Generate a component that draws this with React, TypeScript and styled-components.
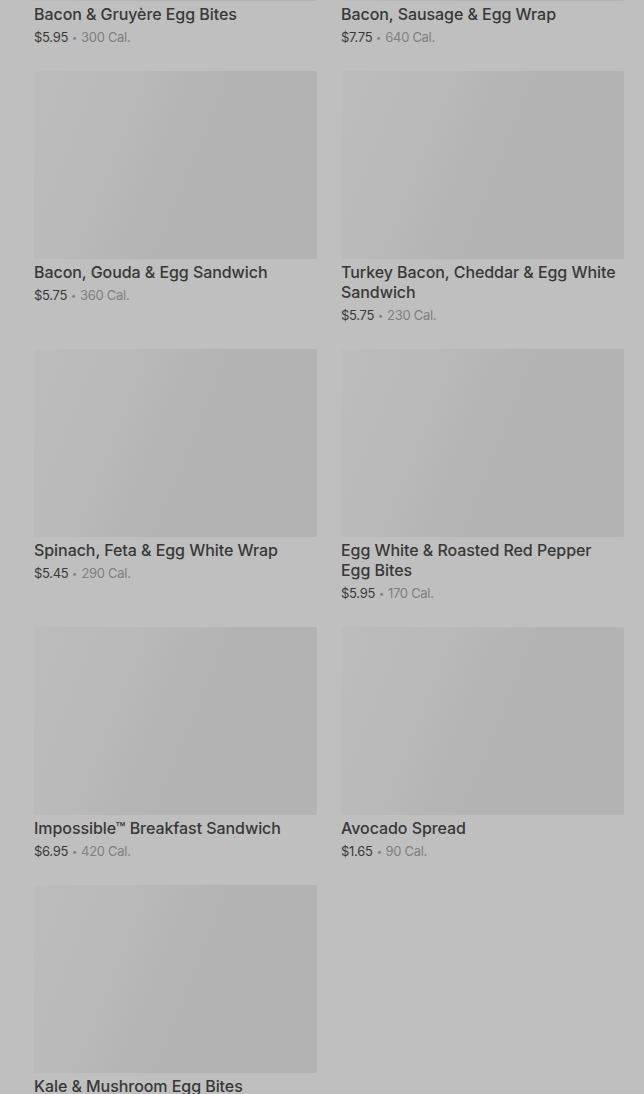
import React from "react";
import styled, { createGlobalStyle } from "styled-components";

const Global = createGlobalStyle`
  html, body {
    margin: 0;
    padding: 0;
    background: #bfbfbf;
    overflow: hidden;
  }
  body {
    font-family: Inter, "Noto Sans", "Liberation Sans", sans-serif;
  }
`;

const Page = styled.div`
  width: 644px;
  height: 1094px;
  overflow: hidden;
  background: #bfbfbf;
`;

const Grid = styled.ul`
  list-style: none;
  margin: -187px 0 0 0;
  padding: 0 20px 0 34px;
  display: grid;
  grid-template-columns: 283px 283px;
  column-gap: 24px;
  row-gap: 24px;
  align-items: start;
`;

const Card = styled.li`
  display: flex;
  flex-direction: column;
`;

const Thumb = styled.div`
  width: 283px;
  height: 188px;
  border-radius: 2px;
  background: linear-gradient(
    112deg,
    #bcbcbc 0%,
    #b9b9b9 30%,
    #b3b3b3 55%,
    #b3b3b3 100%
  );
`;

const Title = styled.div`
  margin-top: 3px;
  font-size: 16px;
  line-height: 20px;
  font-weight: 500;
  letter-spacing: -0.06px;
  color: #383838;
`;

const Meta = styled.div`
  margin-top: 3px;
  height: 20px;
  font-size: 13px;
  line-height: 20px;
  color: #3a3a3a;
  letter-spacing: -0.3px;
`;

const Dot = styled.span`
  display: inline-block;
  color: #808080;
  line-height: 20px;
  margin: 0 3px;
  transform: scale(0.7);
`;

const Cal = styled.span`
  color: #808080;
`;

const items = [
  { name: "Bacon & Gruyère Egg Bites", price: "$5.95", cal: "300 Cal." },
  { name: "Bacon, Sausage & Egg Wrap", price: "$7.75", cal: "640 Cal." },
  { name: "Bacon, Gouda & Egg Sandwich", price: "$5.75", cal: "360 Cal." },
  { name: "Turkey Bacon, Cheddar & Egg White Sandwich", price: "$5.75", cal: "230 Cal." },
  { name: "Spinach, Feta & Egg White Wrap", price: "$5.45", cal: "290 Cal." },
  { name: "Egg White & Roasted Red Pepper Egg Bites", price: "$5.95", cal: "170 Cal." },
  { name: "Impossible™ Breakfast Sandwich", price: "$6.95", cal: "420 Cal." },
  { name: "Avocado Spread", price: "$1.65", cal: "90 Cal." },
  { name: "Kale & Mushroom Egg Bites", price: "$5.95", cal: "230 Cal." },
];

export default function App() {
  return (
    <Page>
      <Global />
      <Grid>
        {items.map((it) => (
          <Card key={it.name}>
            <Thumb />
            <Title>{it.name}</Title>
            <Meta>
              {it.price}
              <Dot>•</Dot>
              <Cal>{it.cal}</Cal>
            </Meta>
          </Card>
        ))}
      </Grid>
    </Page>
  );
}
